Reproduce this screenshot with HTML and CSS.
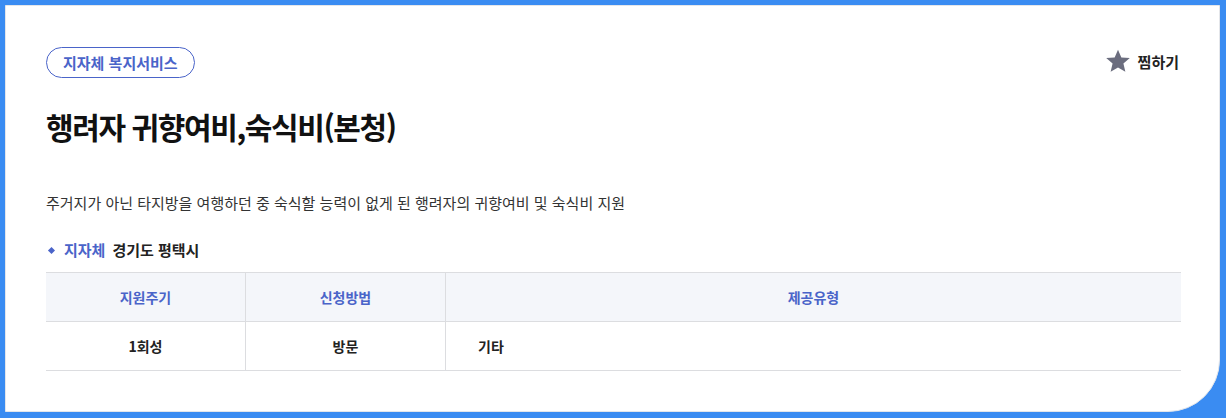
FILE: index.html
```html
<!DOCTYPE html>
<html lang="ko">

<head>
  <meta charset="UTF-8" />
  <meta name="viewport" content="width=device-width, initial-scale=1.0" />
  <title>행려자 귀향여비,숙식비(본청)</title>
  <link rel="stylesheet" href="styles.css">
</head>

<body>
  <div class="card">
    <div class="top">
      <span class="badge">지자체 복지서비스</span>
      <button class="fav" type="button">
        <svg width="26" height="26" viewBox="0 0 24 24">
          <path d="M12 1.5l3.1 7.2 7.8.6-5.9 5.1 1.8 7.6L12 17.9 5.2 22l1.8-7.6L1.1 9.3l7.8-.6z" fill="#6b6d7e" />
        </svg>
        찜하기
      </button>
    </div>

    <h1>행려자 귀향여비,숙식비(본청)</h1>

    <p class="desc">주거지가 아닌 타지방을 여행하던 중 숙식할 능력이 없게 된 행려자의 귀향여비 및 숙식비 지원</p>

    <div class="org">
      <span class="dot"></span>
      <span class="org-label">지자체</span>
      <span class="org-name">경기도 평택시</span>
    </div>

    <table class="info">
      <thead>
        <tr>
          <th class="c1">지원주기</th>
          <th class="c2">신청방법</th>
          <th>제공유형</th>
        </tr>
      </thead>
      <tbody>
        <tr>
          <td>1회성</td>
          <td>방문</td>
          <td class="left">기타</td>
        </tr>
      </tbody>
    </table>
  </div>
</body>

</html>
```

FILE: styles.css
```css
html,
body {
  height: 100%;
}

body {
  margin: 0;
  padding: 5px 6px 6px 5px;
  box-sizing: border-box;
  background-color: #3a8cf2;
  font-family: "Noto Sans CJK KR", "Noto Sans", sans-serif;
  color: #222;
}

.card {
  height: 100%;
  box-sizing: border-box;
  background: #fff;
  border: 1px solid #e4e6ea;
  border-radius: 0 0 52px 0;
  padding: 41px 38px 0 40px;
}

.top {
  display: flex;
  justify-content: space-between;
  align-items: flex-start;
}

.badge {
  display: inline-block;
  height: 31px;
  line-height: 29px;
  box-sizing: border-box;
  padding: 0 16px;
  border: 1px solid #4a64c9;
  border-radius: 16px;
  color: #4a64c9;
  font-size: 15px;
  font-weight: 700;
}

.fav {
  display: flex;
  align-items: center;
  gap: 7px;
  margin: 1px 2px 0 0;
  padding: 0;
  border: 0;
  background: none;
  font-family: inherit;
  font-size: 15px;
  font-weight: 700;
  color: #222;
}

h1 {
  margin: 26px 0 0;
  font-size: 30px;
  font-weight: 700;
  line-height: 44px;
  letter-spacing: -1.4px;
  color: #111;
}

.desc {
  margin: 44px 0 0;
  font-size: 15px;
  line-height: 22px;
  color: #333;
}

.org {
  display: flex;
  align-items: center;
  margin-top: 25px;
  font-size: 15px;
  font-weight: 700;
  line-height: 22px;
}

.dot {
  width: 5px;
  height: 5px;
  margin: 0 10px 0 3px;
  background: #4a64c9;
  transform: rotate(45deg);
}

.org-label {
  color: #4a64c9;
  margin-right: 7px;
}

.org-name {
  color: #222;
}

table.info {
  width: 100%;
  margin-top: 11px;
  border-collapse: collapse;
  font-size: 14px;
}

.info th,
.info td {
  height: 48px;
  padding: 0;
  border-top: 1px solid #dcdde0;
  border-bottom: 1px solid #dcdde0;
  text-align: center;
  font-weight: 700;
}

.info th {
  background-color: #f4f6fa;
  color: #4a64c9;
}

.info th + th,
.info td + td {
  border-left: 1px solid #dcdde0;
}

.info td {
  color: #222;
}

.c1,
.c2 {
  width: 199px;
}

.info td.left {
  text-align: left;
  padding-left: 32px;
}
```
